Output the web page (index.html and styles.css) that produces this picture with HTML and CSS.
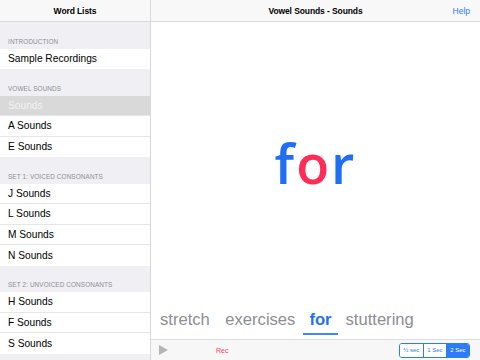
FILE: index.html
```html
<!DOCTYPE html>
<html lang="en">
<head>
  <meta charset="UTF-8">
  <title>Word Lists</title>
  <link rel="stylesheet" href="styles.css">
</head>
<body>
  <div class="app">
    <aside class="sidebar">
      <div class="navbar"><span class="nav-title">Word Lists</span></div>
      <div class="list">
        <div class="section">Introduction</div>
        <div class="row last">Sample Recordings</div>

        <div class="section">Vowel Sounds</div>
        <div class="row selected">Sounds</div>
        <div class="row">A Sounds</div>
        <div class="row last">E Sounds</div>

        <div class="section">Set 1: Voiced Consonants</div>
        <div class="row">J Sounds</div>
        <div class="row">L Sounds</div>
        <div class="row">M Sounds</div>
        <div class="row last">N Sounds</div>

        <div class="section">Set 2: Unvoiced Consonants</div>
        <div class="row">H Sounds</div>
        <div class="row">F Sounds</div>
        <div class="row last">S Sounds</div>
      </div>
    </aside>

    <main class="detail">
      <div class="navbar">
        <span class="nav-title">Vowel Sounds - Sounds</span>
        <a class="help">Help</a>
      </div>

      <div class="stage">
        <div class="big-word"><span class="blue">f</span><span class="red">o</span><span class="blue">r</span></div>
      </div>

      <div class="sentence">
        <span class="word">stretch</span>
        <span class="word">exercises</span>
        <span class="word current">for</span>
        <span class="word">stuttering</span>
      </div>

      <div class="toolbar">
        <svg class="play" width="9" height="10" viewBox="0 0 9 10"><path d="M0 0 L9 5 L0 10 Z" fill="#b4b4b8"/></svg>
        <span class="rec">Rec</span>
        <div class="segments">
          <span class="seg">½ sec</span>
          <span class="seg">1 Sec</span>
          <span class="seg on">2 Sec</span>
        </div>
      </div>
    </main>
  </div>
</body>
</html>
```

FILE: styles.css
```css
* {
  box-sizing: border-box;
}

body {
  margin: 0;
  font-family: "Liberation Sans", Arial, sans-serif;
  color: #000;
  background: #fff;
}

.app {
  display: flex;
  width: 480px;
  height: 360px;
  overflow: hidden;
}

.sidebar {
  width: 151px;
  background: #efeff4;
  border-right: 1px solid #d8d8dc;
  display: flex;
  flex-direction: column;
}

.navbar {
  height: 22px;
  flex: none;
  background: #f8f8f8;
  border-bottom: 1px solid #d9d9dc;
  display: flex;
  align-items: center;
  justify-content: center;
  position: relative;
}

.nav-title {
  font-size: 8.5px;
  font-weight: bold;
  letter-spacing: -0.1px;
}

.help {
  position: absolute;
  right: 10px;
  top: 6px;
  font-size: 8.5px;
  color: #2d7cf6;
}

.list {
  flex: 1;
}

.section {
  height: 26.5px;
  padding: 0 0 4px 8px;
  display: flex;
  align-items: flex-end;
  font-size: 6.4px;
  text-transform: uppercase;
  color: #8e8e93;
  letter-spacing: 0.1px;
}

.row {
  height: 20.5px;
  background: #fff;
  font-size: 10.2px;
  padding-left: 8px;
  display: flex;
  align-items: center;
  border-bottom: 1px solid #e6e6e9;
}

.row.last {
  border-bottom: none;
}

.row.selected {
  background: #d9d9d9;
  color: #f2f2f2;
}

.detail {
  flex: 1;
  display: flex;
  flex-direction: column;
}

.stage {
  flex: 1;
  display: flex;
  align-items: center;
  justify-content: center;
  padding-top: 2px;
}

.big-word {
  font-family: "Open Sans", sans-serif;
  font-weight: 600;
  font-size: 54px;
  letter-spacing: 2px;
  line-height: 1;
}

.blue {
  color: #1f6ff5;
}

.red {
  color: #ff2d55;
}

.sentence {
  display: flex;
  gap: 1px;
  padding: 0 0 4px 9px;
  height: 38px;
  align-items: flex-end;
}

.word {
  font-size: 16.6px;
  color: #8e8e93;
  padding: 0 6.5px 3px;
  border-bottom: 2px solid transparent;
  line-height: 20px;
}

.word:first-child {
  padding-left: 0;
  padding-right: 8px;
}

.word.current {
  color: #1f6ff5;
  font-weight: bold;
  border-bottom-color: #3d87f8;
}

.toolbar {
  height: 21px;
  flex: none;
  background: #f7f7f7;
  border-top: 1px solid #dedee0;
  display: flex;
  align-items: center;
  padding: 0 10px 0 8px;
}

.play {
  margin-right: 48px;
}

.rec {
  font-size: 7px;
  color: #ff3b5c;
}

.segments {
  margin-left: auto;
  display: flex;
  border: 1px solid #2d7cf6;
  border-radius: 3px;
  overflow: hidden;
  height: 15px;
}

.seg {
  font-size: 6px;
  color: #2d7cf6;
  background: #fff;
  padding: 0 3.4px;
  display: flex;
  align-items: center;
  border-left: 1px solid #2d7cf6;
}

.seg:first-child {
  border-left: none;
}

.seg.on {
  background: #2d7cf6;
  color: #fff;
}
```
